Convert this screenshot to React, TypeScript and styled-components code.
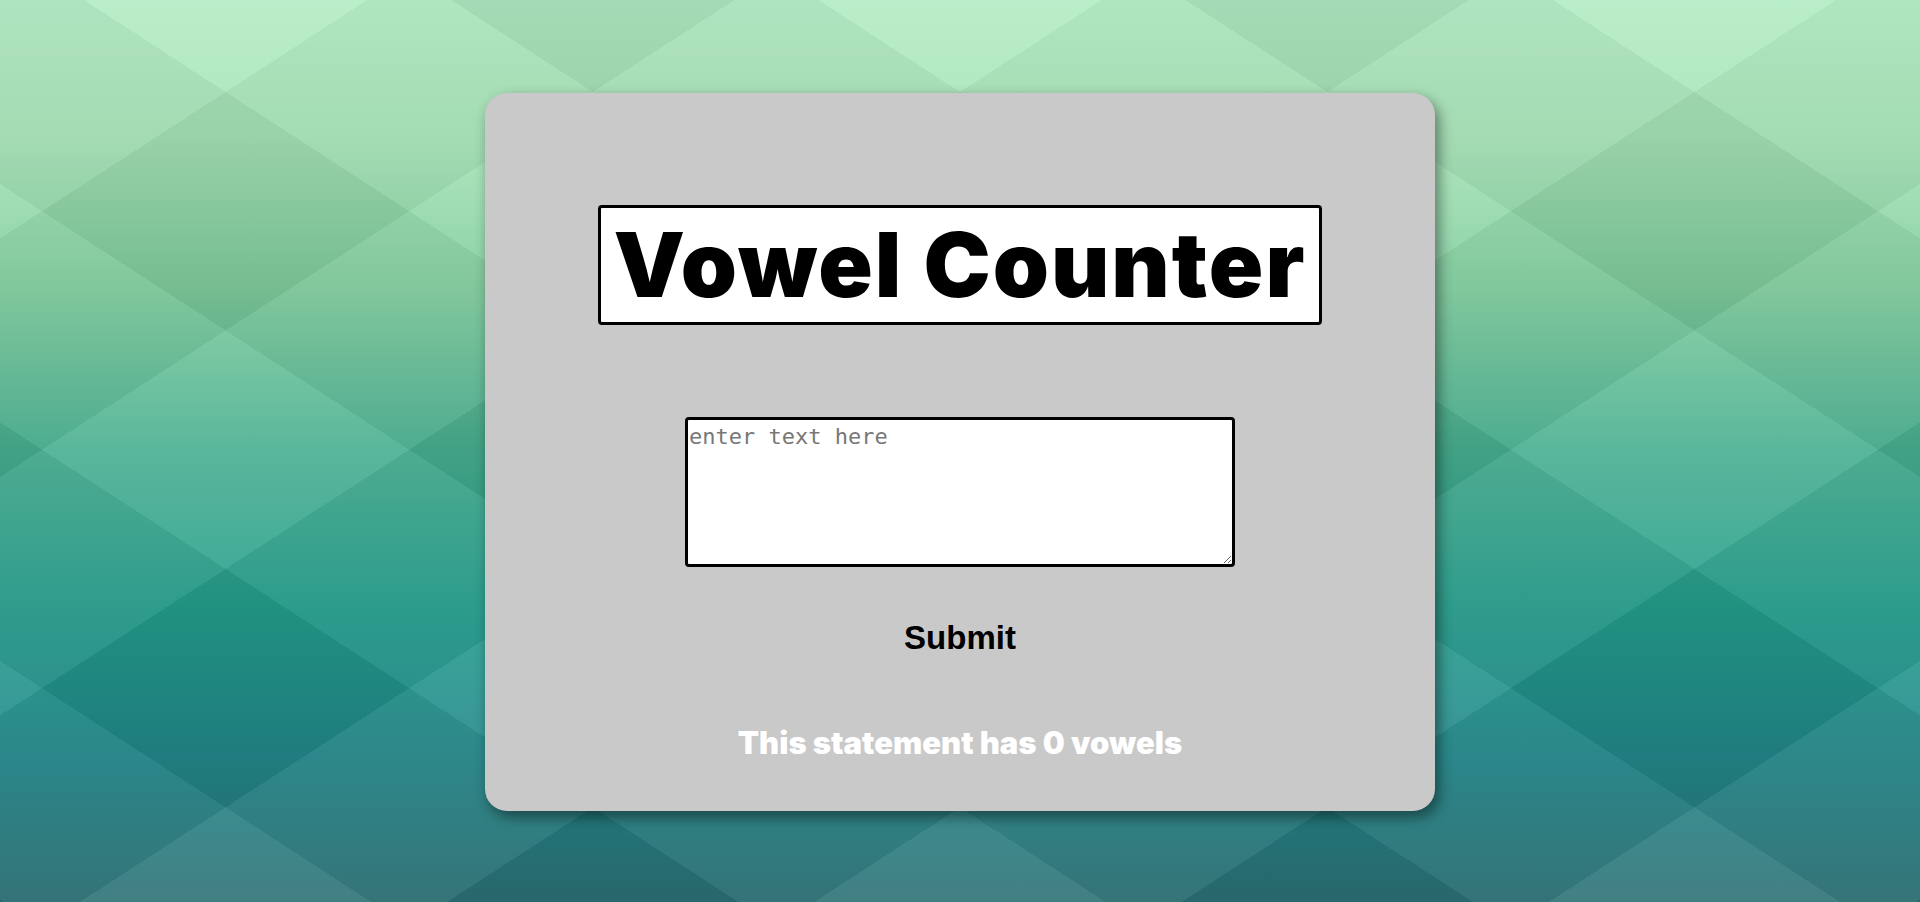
import React, { useState } from "react";
import styled, { createGlobalStyle } from "styled-components";

const GlobalStyle = createGlobalStyle`
  html, body {
    margin: 0;
    padding: 0;
  }
  body {
    font-family: "Liberation Sans", Arial, sans-serif;
  }
`;

const Page = styled.main`
  min-height: 100vh;
  display: flex;
  flex-direction: column;
  align-items: center;
  background:
    repeating-linear-gradient(
      147deg,
      rgba(255, 255, 255, 0.06) 0px,
      rgba(255, 255, 255, 0.06) 200px,
      rgba(0, 0, 0, 0.035) 200px,
      rgba(0, 0, 0, 0.035) 400px
    ),
    repeating-linear-gradient(
      213deg,
      rgba(255, 255, 255, 0.05) 0px,
      rgba(255, 255, 255, 0.05) 200px,
      rgba(0, 0, 0, 0.045) 200px,
      rgba(0, 0, 0, 0.045) 400px
    ),
    linear-gradient(
      to bottom,
      #b2ecc4 0%,
      #a6e3b6 15%,
      #7fcc9d 32%,
      #46ae8f 50%,
      #229c8b 68%,
      #218689 84%,
      #2b7074 100%
    );
`;

const Card = styled.section`
  margin-top: 93px;
  width: 950px;
  height: 718px;
  box-sizing: border-box;
  background: #c9c9c9;
  border-radius: 22px;
  box-shadow: 4px 6px 14px rgba(0, 0, 0, 0.45);
  display: flex;
  flex-direction: column;
  align-items: center;
  padding-top: 112px;
`;

const TitleBox = styled.div`
  width: 724px;
  height: 120px;
  box-sizing: border-box;
  background: #fff;
  border: 3px solid #000;
  border-radius: 4px;
  display: flex;
  align-items: center;
  justify-content: center;
`;

const Title = styled.h1`
  margin: 0;
  font-family: Inter, "Liberation Sans", sans-serif;
  font-weight: 900;
  font-size: 90px;
  line-height: 1;
  letter-spacing: 2px;
  color: #000;
`;

const TextInput = styled.textarea`
  margin-top: 92px;
  width: 550px;
  height: 150px;
  box-sizing: border-box;
  border: 3px solid #000;
  border-radius: 4px;
  padding: 4px 1px 2px;
  font-family: "DejaVu Sans Mono", monospace;
  font-size: 22px;
  background: #fff;

  &::placeholder {
    color: #777;
  }
`;

const SubmitButton = styled.button`
  margin-top: 52px;
  border: none;
  background: transparent;
  padding: 0;
  font-family: "Liberation Sans", Arial, sans-serif;
  font-weight: 900;
  font-size: 33px;
  color: #000;
  cursor: pointer;
`;

const Result = styled.p`
  margin: 70px 0 0;
  font-family: Inter, "Liberation Sans", sans-serif;
  font-weight: 900;
  font-size: 31px;
  line-height: 1;
  letter-spacing: 0;
  color: #fff;
`;

const countVowels = (s: string) => (s.match(/[aeiou]/gi) || []).length;

export default function App() {
  const [text, setText] = useState("");
  const [count, setCount] = useState(0);

  return (
    <>
      <GlobalStyle />
      <Page>
        <Card>
          <TitleBox>
            <Title>Vowel Counter</Title>
          </TitleBox>
          <TextInput
            placeholder="enter text here"
            value={text}
            onChange={(e) => setText(e.target.value)}
          />
          <SubmitButton onClick={() => setCount(countVowels(text))}>Submit</SubmitButton>
          <Result>This statement has {count} vowels</Result>
        </Card>
      </Page>
    </>
  );
}
